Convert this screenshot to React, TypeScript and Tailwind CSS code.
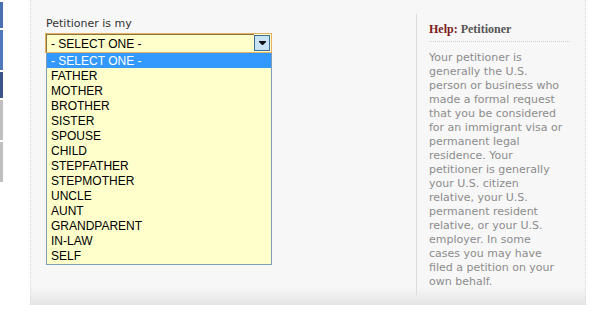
const options = [
  "- SELECT ONE -",
  "FATHER",
  "MOTHER",
  "BROTHER",
  "SISTER",
  "SPOUSE",
  "CHILD",
  "STEPFATHER",
  "STEPMOTHER",
  "UNCLE",
  "AUNT",
  "GRANDPARENT",
  "IN-LAW",
  "SELF",
];

const helpLines = [
  "Your petitioner is",
  "generally the U.S.",
  "person or business who",
  "made a formal request",
  "that you be considered",
  "for an immigrant visa or",
  "permanent legal",
  "residence. Your",
  "petitioner is generally",
  "your U.S. citizen",
  "relative, your U.S.",
  "permanent resident",
  "relative, or your U.S.",
  "employer. In some",
  "cases you may have",
  "filed a petition on your",
  "own behalf.",
];

function SideTabs() {
  return (
    <div className="flex w-[3px] flex-col gap-[2px] pt-[2px]">
      <div className="h-[26px] bg-[#4b70b0]" />
      <div className="h-[40px] bg-[#5078b8]" />
      <div className="h-[26px] bg-[#3b528b]" />
      <div className="h-[40px] bg-[#bfbfbf]" />
      <div className="h-[40px] bg-[#bfbfbf]" />
    </div>
  );
}

function SelectBox() {
  return (
    <div className="relative w-[227px]">
      {/* closed select */}
      <div className="flex h-[20px] items-center border border-[#e3b15f] bg-[#ffffcc]">
        <div className="flex h-[18px] flex-1 items-center border-t border-l border-[#8a7440] pl-[4px] text-[12px] text-black">
          - SELECT ONE -
        </div>
        <div className="mr-[1px] flex h-[16px] w-[16px] items-center justify-center border border-[#3e6c96] bg-[#c8e2f6]">
          <svg width="7" height="5" viewBox="0 0 7 5">
            <path d="M0 0H7V1L4 4H3L0 1Z" fill="#111" />
          </svg>
        </div>
      </div>

      {/* open list */}
      <div className="absolute left-[1px] top-[20px] w-[226px] border border-t-0 border-[#7f9db9] bg-[#ffffcc] pb-[1px]">
        {options.map((o, i) => (
          <div
            key={o}
            className={
              i === 0
                ? "flex h-[15px] items-center bg-[#3399ff] pl-[4px] text-[12px] text-white"
                : "flex h-[15px] items-center pl-[4px] text-[12px] text-black"
            }
          >
            {o}
          </div>
        ))}
      </div>
    </div>
  );
}

export default function App() {
  return (
    <div className="flex h-[312px] w-[600px] bg-white font-['Liberation_Sans',Arial,sans-serif]">
      <SideTabs />
      <div className="ml-[27px] flex h-[305px] w-[556px] border-r border-l border-dotted border-[#d6d6d6] bg-[linear-gradient(to_bottom,#f7f7f7_0,#f7f7f7_286px,#e6e6e6_305px)]">
        {/* form column */}
        <div className="w-[385px] pt-[17px] pl-[14px]">
          <div className="mb-[3px] ml-[1px] font-['DejaVu_Sans',Verdana,sans-serif] text-[11px] leading-[13px] text-[#333]">
            Petitioner is my
          </div>
          <SelectBox />
        </div>

        {/* help column */}
        <div className="mt-[14px] mb-[10px] w-[154px] border-l border-[#dcdcdc] pl-[12px]">
          <div className="border-b border-dotted border-[#cfcfcf] pt-[8px] pb-[5px] font-['Liberation_Serif',serif] text-[12px] font-bold leading-[14px] text-[#555]">
            <span className="text-[#7a1c1c]">Help:</span> Petitioner
          </div>
          <div className="pt-[9px] font-['DejaVu_Sans',Verdana,sans-serif] text-[11px] leading-[14px] text-[#8c8c8c]">
            {helpLines.map((l) => (
              <div key={l} className="whitespace-nowrap">
                {l}
              </div>
            ))}
          </div>
        </div>
      </div>
    </div>
  );
}
